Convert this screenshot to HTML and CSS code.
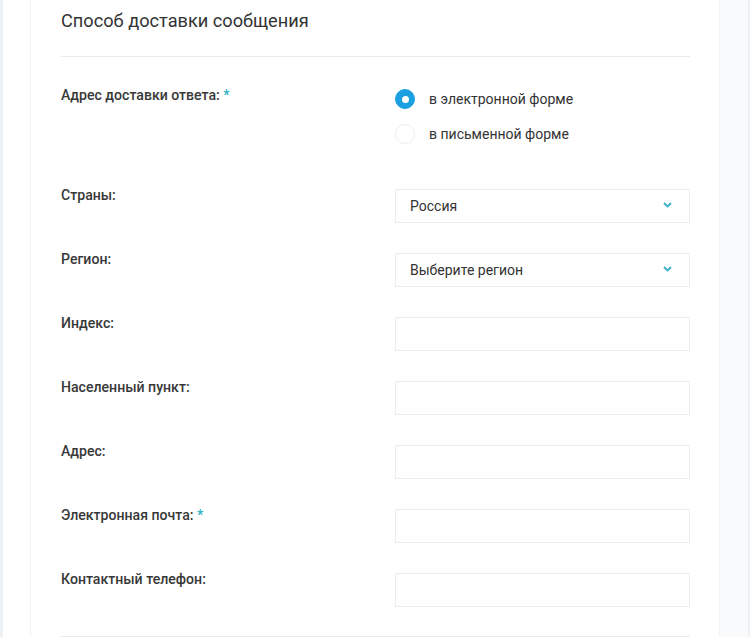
FILE: index.html
```html
<!DOCTYPE html>
<html lang="ru">
<head>
<meta charset="utf-8">
<title>Способ доставки сообщения</title>
<link rel="stylesheet" href="styles.css">
</head>
<body>
<div class="page">
  <div class="card">
    <h2 class="title">Способ доставки сообщения</h2>
    <div class="form">
      <div class="row row-radio">
        <div class="label">Адрес доставки ответа: <span class="req">*</span></div>
        <div class="field radios">
          <label class="radio"><span class="dot checked"></span><span>в электронной форме</span></label>
          <label class="radio"><span class="dot"></span><span>в письменной форме</span></label>
        </div>
      </div>
      <div class="row">
        <div class="label">Страны:</div>
        <div class="field"><div class="box select"><span>Россия</span><svg class="chev" width="9" height="6" viewBox="0 0 9 6"><path d="M1 1l3.5 3.5L8 1" fill="none" stroke="#39aecb" stroke-width="1.8"/></svg></div></div>
      </div>
      <div class="row">
        <div class="label">Регион:</div>
        <div class="field"><div class="box select"><span>Выберите регион</span><svg class="chev" width="9" height="6" viewBox="0 0 9 6"><path d="M1 1l3.5 3.5L8 1" fill="none" stroke="#39aecb" stroke-width="1.8"/></svg></div></div>
      </div>
      <div class="row">
        <div class="label">Индекс:</div>
        <div class="field"><div class="box"></div></div>
      </div>
      <div class="row">
        <div class="label">Населенный пункт:</div>
        <div class="field"><div class="box"></div></div>
      </div>
      <div class="row">
        <div class="label">Адрес:</div>
        <div class="field"><div class="box"></div></div>
      </div>
      <div class="row">
        <div class="label">Электронная почта: <span class="req">*</span></div>
        <div class="field"><div class="box"></div></div>
      </div>
      <div class="row">
        <div class="label">Контактный телефон:</div>
        <div class="field"><div class="box"></div></div>
      </div>
    </div>
    <div class="bottom-line"></div>
  </div>
  <div class="side"></div>
</div>
</body>
</html>
```
FILE: styles.css
```css
* { box-sizing: border-box; }
html, body { margin: 0; padding: 0; }
body {
  background: #ffffff;
  font-family: Roboto, "Liberation Sans", Arial, sans-serif;
  color: #333333;
}
.page {
  display: flex;
  height: 637px;
  overflow: hidden;
  border-left: 3px solid #eef1f4;
  padding-left: 27px;
}
.card {
  width: 690px;
  flex: none;
  border-left: 1px solid #f1f3f5;
  border-right: 1px solid #f1f3f5;
  padding: 9px 29px 0 30px;
}
.title {
  margin: 0;
  font-size: 18.2px;
  font-weight: 400;
  line-height: 24px;
  color: #333;
  padding-bottom: 23px;
  border-bottom: 1px solid #e9ecef;
}
.form {
  padding-top: 31px;
}
.row {
  display: flex;
  align-items: flex-start;
  margin-bottom: 29px;
}
.row-radio {
  margin-bottom: 44px;
}
.label {
  width: 334px;
  flex: none;
  font-size: 14.1px;
  font-weight: 500;
  line-height: 16px;
  color: #383838;
  margin-top: -1px;
}
.req { color: #2bb3c0; font-weight: 500; }
.field {
  flex: 1;
  padding-top: 1px;
}
.radios {
  display: flex;
  flex-direction: column;
  gap: 15px;
}
.radio {
  display: flex;
  align-items: center;
  gap: 14px;
  font-size: 14px;
  line-height: 20px;
  color: #333;
  height: 20px;
}
.dot {
  width: 20px;
  height: 20px;
  border-radius: 50%;
  border: 1px solid #eceef0;
  background: #fff;
  flex: none;
  display: flex;
  align-items: center;
  justify-content: center;
}
.dot.checked {
  border-color: #1ba1e2;
  background: #1ba1e2;
}
.dot.checked::after {
  content: "";
  width: 7px;
  height: 7px;
  border-radius: 50%;
  background: #fff;
}
.box {
  height: 34px;
  border: 1px solid #eaedf0;
  background: #fff;
}
.select {
  display: flex;
  align-items: center;
  justify-content: space-between;
  padding: 0 17px 0 14px;
  font-size: 14px;
  color: #333;
}
.chev { margin-top: -2px; }
.bottom-line {
  border-top: 1px solid #e9ecef;
}
.side {
  flex: 1;
  background: #f9fafc;
  border-right: 2px solid #eef1f4;
}
```
